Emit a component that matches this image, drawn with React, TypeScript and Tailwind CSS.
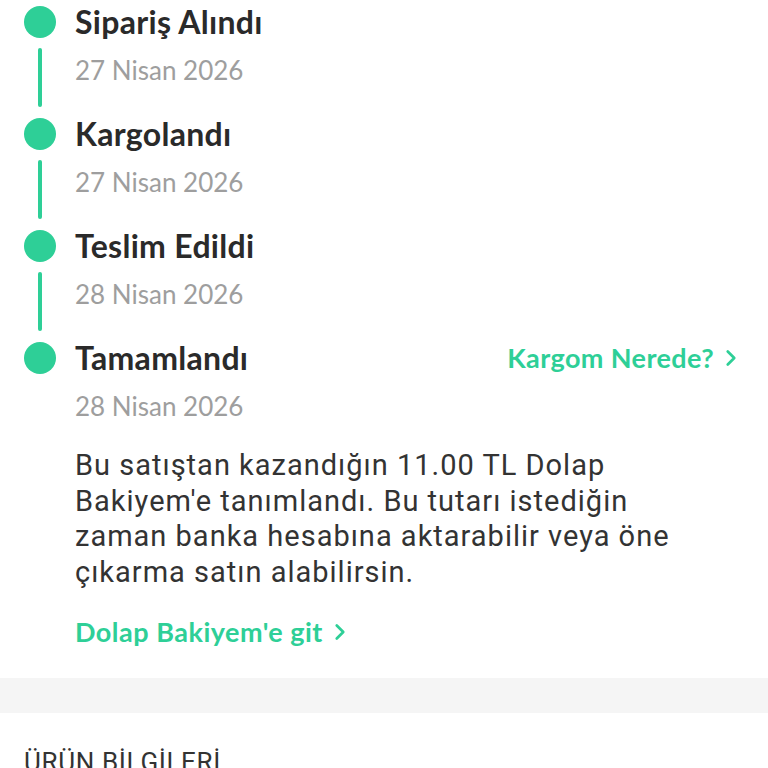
import { ChevronRight } from "lucide-react";

const GREEN = "text-[#2ecf97]";

type Step = { title: string; date: string; last?: boolean };

const steps: Step[] = [
  { title: "Sipariş Alındı", date: "27 Nisan 2026" },
  { title: "Kargolandı", date: "27 Nisan 2026" },
  { title: "Teslim Edildi", date: "28 Nisan 2026" },
  { title: "Tamamlandı", date: "28 Nisan 2026", last: true },
];

function TimelineStep({ step }: { step: Step }) {
  return (
    <div className="flex">
      <div className="flex w-8 flex-col items-center">
        <div className="h-8 w-8 rounded-full bg-[#2ecf97]" />
        {!step.last && <div className="mt-2.5 mb-[11px] h-[59px] w-1 rounded-full bg-[#2ecf97]" />}
      </div>
      <div className="ml-[19px] flex-1">
        <div className="flex h-8 items-center justify-between">
          <h3 className="font-['Lato',sans-serif] text-[32px] leading-8 font-bold tracking-[0.3px] text-[#2a2a2a]">
            {step.title}
          </h3>
          {step.last && (
            <a className={`flex items-center font-['Lato',sans-serif] text-[27px] font-bold tracking-[0.4px] ${GREEN}`}>
              Kargom Nerede?
              <ChevronRight size={26} strokeWidth={2.5} className="ml-1" />
            </a>
          )}
        </div>
        <p className="mt-4 font-['Lato',sans-serif] text-[26px] leading-8 text-[#9e9e9e]">
          {step.date}
        </p>
      </div>
    </div>
  );
}

export default function App() {
  return (
    <div className="min-h-screen w-[768px] bg-white">
      <div className="pt-1.5 pr-6 pl-6">
        {steps.map((s) => (
          <TimelineStep key={s.title} step={s} />
        ))}
        <div className="pl-[51px]">
          <p className="mt-[26px] max-w-[630px] font-['Roboto',sans-serif] text-[29px] leading-[35.5px] tracking-[1px] text-[#333333]">
            Bu satıştan kazandığın 11.00 TL Dolap Bakiyem'e tanımlandı. Bu tutarı istediğin zaman banka
            hesabına aktarabilir veya öne çıkarma satın alabilirsin.
          </p>
          <a className={`mt-[26px] flex h-8 items-center font-['Lato',sans-serif] text-[27px] font-bold tracking-[0.5px] ${GREEN}`}>
            Dolap Bakiyem'e git
            <ChevronRight size={26} strokeWidth={2.5} className="ml-1" />
          </a>
        </div>
      </div>
      <div className="mt-[30px] h-[35px] bg-[#f5f5f5]" />
      <h2 className="mt-[30px] pl-6 font-['Roboto',sans-serif] text-[26px] tracking-wide text-[#333333]">
        ÜRÜN BİLGİLERİ
      </h2>
    </div>
  );
}
